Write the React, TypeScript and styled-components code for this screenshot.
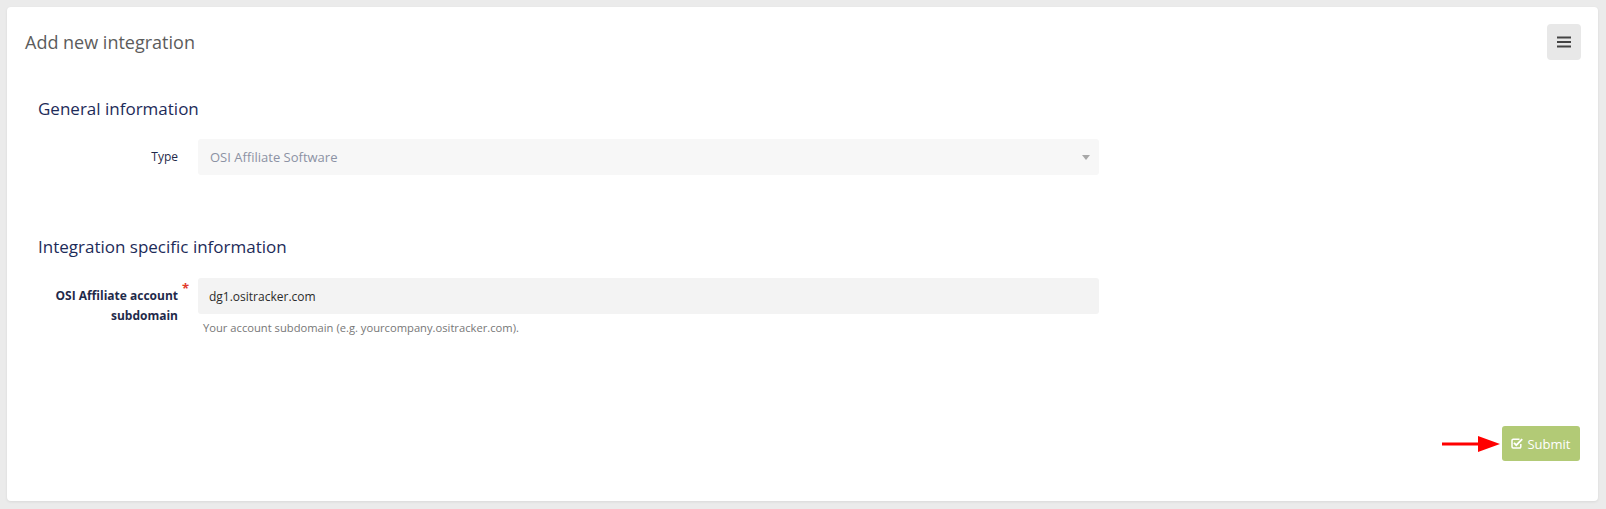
import React from "react";
import styled, { createGlobalStyle } from "styled-components";

const GlobalStyle = createGlobalStyle`
  html, body {
    margin: 0;
    padding: 0;
    background: #ebebeb;
    font-family: "Open Sans", "Liberation Sans", sans-serif;
  }
  * { box-sizing: border-box; }
`;

const Page = styled.div`
  padding: 7px 8px 8px 7px;
`;

const Card = styled.div`
  background: #fff;
  border-radius: 4px;
  box-shadow: 0 1px 3px rgba(0, 0, 0, 0.08);
  height: 494px;
  padding: 17px 17px 40px 18px;
  display: flex;
  flex-direction: column;
`;

const Header = styled.div`
  display: flex;
  align-items: center;
  justify-content: space-between;
  height: 36px;
`;

const Title = styled.h2`
  margin: 0;
  font-size: 18px;
  font-weight: 400;
  line-height: 24px;
  color: #5c5c5c;
`;

const MenuButton = styled.button`
  width: 34px;
  height: 36px;
  border: 0;
  border-radius: 4px;
  background: #e8e8e8;
  display: flex;
  align-items: center;
  justify-content: center;
  padding: 0;
`;

const Body = styled.div`
  padding-left: 13px;
`;

const SectionTitle = styled.h3<{ $top: number }>`
  margin: ${(p) => p.$top}px 0 0;
  font-size: 17px;
  font-weight: 400;
  line-height: 24px;
  color: #1d2b59;
`;

const FormRow = styled.div<{ $top: number }>`
  display: grid;
  grid-template-columns: 140px 901px;
  column-gap: 20px;
  margin-top: ${(p) => p.$top}px;
`;

const Label = styled.label<{ $bold?: boolean }>`
  position: relative;
  text-align: right;
  padding-top: 8px;
  font-size: 12px;
  line-height: 20px;
  font-weight: ${(p) => (p.$bold ? 700 : 400)};
  color: #1f2a4a;
`;

const Required = styled.span`
  position: absolute;
  top: 3px;
  right: -11px;
  color: #e23a2a;
  font-size: 13px;
  font-weight: 700;
  line-height: 14px;
`;

const SelectBox = styled.div`
  position: relative;
  height: 36px;
  border-radius: 3px;
  background: #f7f7f7;
  padding: 0 12px;
  display: flex;
  align-items: center;
  font-size: 13px;
  color: #8c92a4;
`;

const Caret = styled.span`
  position: absolute;
  right: 9px;
  top: 16px;
  width: 0;
  height: 0;
  border-left: 4px solid transparent;
  border-right: 4px solid transparent;
  border-top: 5px solid #a8a8a8;
`;

const TextInput = styled.input`
  width: 100%;
  height: 36px;
  border: 0;
  border-radius: 3px;
  background: #f3f3f3;
  padding: 0 11px;
  font-family: inherit;
  font-size: 12px;
  color: #2b2b2b;
  outline: none;
`;

const HelpText = styled.div`
  margin-top: 6px;
  font-size: 11.2px;
  line-height: 15px;
  color: #777;
  padding-left: 5px;
`;

const Footer = styled.div`
  margin-top: auto;
  display: flex;
  justify-content: flex-end;
  align-items: center;
  gap: 2px;
`;

const SubmitButton = styled.button`
  width: 78px;
  height: 35px;
  border: 0;
  border-radius: 3px;
  background: #b2ca76;
  color: #fff;
  font-family: inherit;
  font-size: 13px;
  display: flex;
  align-items: center;
  justify-content: center;
  gap: 4px;
  padding: 0;
  margin-right: 1px;
`;

const BarsIcon = () => (
  <svg width="14" height="12" viewBox="0 0 14 12">
    <rect x="0" y="0.5" width="14" height="2" fill="#444" />
    <rect x="0" y="5" width="14" height="2" fill="#444" />
    <rect x="0" y="9.5" width="14" height="2" fill="#444" />
  </svg>
);

const CheckSquareIcon = () => (
  <svg width="12" height="11" viewBox="0 0 12 11">
    <path
      d="M8.5 1.2 H2.2 a1.2 1.2 0 0 0 -1.2 1.2 V8.8 a1.2 1.2 0 0 0 1.2 1.2 H8.6 a1.2 1.2 0 0 0 1.2 -1.2 V6"
      fill="none"
      stroke="#fff"
      strokeWidth="1.5"
    />
    <path d="M3 4.8 L5.3 7.1 L11.2 1.2" fill="none" stroke="#fff" strokeWidth="1.9" />
  </svg>
);

const RedArrow = () => (
  <svg width="58" height="18" viewBox="0 0 58 18">
    <rect x="0" y="7.5" width="38" height="3" fill="#f00" />
    <polygon points="36,1 58,9 36,17" fill="#f00" />
  </svg>
);

export default function App() {
  return (
    <>
      <GlobalStyle />
      <Page>
        <Card>
          <Header>
            <Title>Add new integration</Title>
            <MenuButton aria-label="menu">
              <BarsIcon />
            </MenuButton>
          </Header>
          <Body>
            <SectionTitle $top={37}>General information</SectionTitle>
            <FormRow $top={18}>
              <Label>Type</Label>
              <SelectBox>
                OSI Affiliate Software
                <Caret />
              </SelectBox>
            </FormRow>

            <SectionTitle $top={60}>Integration specific information</SectionTitle>
            <FormRow $top={19}>
              <Label $bold>
                OSI Affiliate account
                <br />
                subdomain
                <Required>*</Required>
              </Label>
              <div>
                <TextInput defaultValue="dg1.ositracker.com" />
                <HelpText>Your account subdomain (e.g. yourcompany.ositracker.com).</HelpText>
              </div>
            </FormRow>
          </Body>
          <Footer>
            <RedArrow />
            <SubmitButton>
              <CheckSquareIcon />
              Submit
            </SubmitButton>
          </Footer>
        </Card>
      </Page>
    </>
  );
}
